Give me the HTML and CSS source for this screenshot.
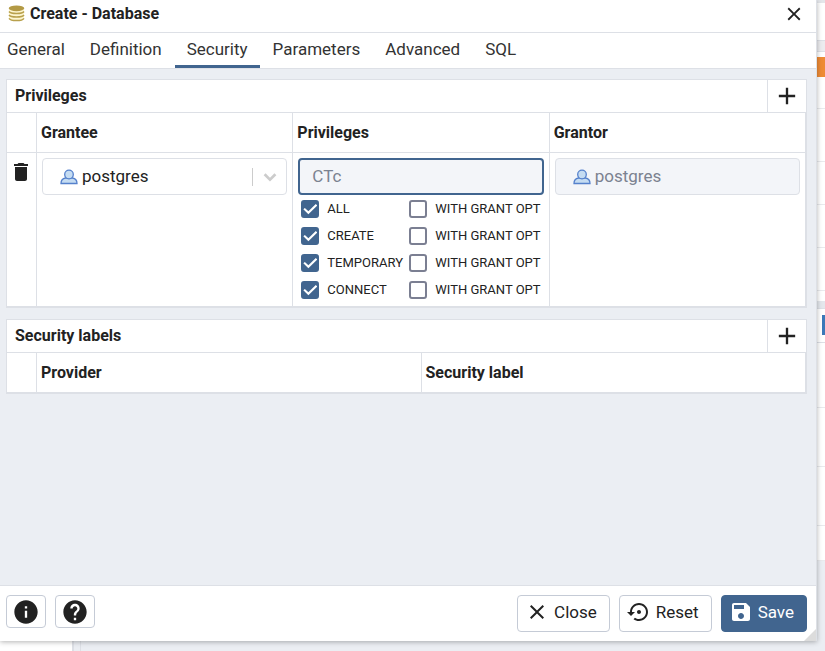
FILE: index.html
```html
<!DOCTYPE html>
<html lang="en">

<head>
  <meta charset="UTF-8">
  <meta name="viewport" content="width=device-width, initial-scale=1.0">
  <title>Create - Database</title>
  <link rel="stylesheet" href="styles.css">
</head>

<body>

  <div class="dialog" role="dialog" aria-labelledby="dialog-title">
    <header class="dialog-header">
      <svg class="icon-database" viewBox="0 0 17 17" aria-hidden="true">
        <path d="M1 3v10.500c0 1.500 3.500 2.500 7.500 2.500s7.500-1 7.500-2.500V3z" fill="#fdf6d0" />
        <path d="M1 6.500c1 1.500 4 2 7.500 2s6.500-.5 7.500-2M1 10c1 1.500 4 2 7.500 2s6.500-.5 7.500-2M1 13.300c1 1.700 4 2.200 7.500 2.200s6.500-.5 7.500-2.200" fill="none" stroke="#b8a04c" stroke-width="1.400" />
        <ellipse cx="8.500" cy="3.300" rx="7.800" ry="2.900" fill="#b39a45" />
      </svg>
      <h1 id="dialog-title">Create - Database</h1>
      <button class="btn-close" type="button" aria-label="Close dialog">
        <svg viewBox="0 0 24 24"><path d="M19 6.410 17.590 5 12 10.590 6.410 5 5 6.410 10.590 12 5 17.590 6.410 19 12 13.410 17.590 19 19 17.590 13.410 12z" /></svg>
      </button>
    </header>

    <nav class="tabs">
      <a href="#general">General</a>
      <a href="#definition">Definition</a>
      <a href="#security" class="active">Security</a>
      <a href="#parameters">Parameters</a>
      <a href="#advanced">Advanced</a>
      <a href="#sql">SQL</a>
    </nav>

    <main class="dialog-body">
      <section class="panel">
        <div class="panel-header">
          <h2>Privileges</h2>
          <button type="button" aria-label="Add privilege">
            <svg viewBox="0 0 24 24"><path d="M19 13h-6v6h-2v-6H5v-2h6V5h2v6h6z" /></svg>
          </button>
        </div>
        <table>
          <thead>
            <tr>
              <th class="col-action"></th>
              <th>Grantee</th>
              <th>Privileges</th>
              <th>Grantor</th>
            </tr>
          </thead>
          <tbody>
            <tr>
              <td class="col-action">
                <button class="btn-delete" type="button" aria-label="Delete row">
                  <svg viewBox="0 0 24 24"><path d="M6 19c0 1.100.9 2 2 2h8c1.100 0 2-.9 2-2V7H6zM19 4h-3.500l-1-1h-5l-1 1H5v2h14z" /></svg>
                </button>
              </td>
              <td>
                <div class="field">
                  <select aria-label="Grantee">
                    <option>postgres</option>
                  </select>
                  <svg class="icon-user" viewBox="0 0 18 16" aria-hidden="true">
                    <path d="M1 14.500c0-3 1.500-5 4.500-5.500h7c3 .5 4.500 2.500 4.500 5.500z" />
                    <circle cx="9" cy="5.500" r="4.300" />
                  </svg>
                  <span class="caret">
                    <svg viewBox="0 0 20 20"><path d="m4 7 6 6 6-6" /></svg>
                  </span>
                </div>
              </td>
              <td>
                <input class="privileges" type="text" value="CTc" aria-label="Privileges" readonly>
                <div class="options">
                  <label><input type="checkbox" checked>ALL</label>
                  <label><input type="checkbox">WITH GRANT OPT</label>
                  <label><input type="checkbox" checked>CREATE</label>
                  <label><input type="checkbox">WITH GRANT OPT</label>
                  <label><input type="checkbox" checked>TEMPORARY</label>
                  <label><input type="checkbox">WITH GRANT OPT</label>
                  <label><input type="checkbox" checked>CONNECT</label>
                  <label><input type="checkbox">WITH GRANT OPT</label>
                </div>
              </td>
              <td>
                <div class="field">
                  <select aria-label="Grantor" disabled>
                    <option>postgres</option>
                  </select>
                  <svg class="icon-user" viewBox="0 0 18 16" aria-hidden="true">
                    <path d="M1 14.500c0-3 1.500-5 4.500-5.500h7c3 .5 4.500 2.500 4.500 5.500z" />
                    <circle cx="9" cy="5.500" r="4.300" />
                  </svg>
                </div>
              </td>
            </tr>
          </tbody>
        </table>
      </section>

      <section class="panel">
        <div class="panel-header">
          <h2>Security labels</h2>
          <button type="button" aria-label="Add security label">
            <svg viewBox="0 0 24 24"><path d="M19 13h-6v6h-2v-6H5v-2h6V5h2v6h6z" /></svg>
          </button>
        </div>
        <table>
          <thead>
            <tr>
              <th class="col-action"></th>
              <th>Provider</th>
              <th>Security label</th>
            </tr>
          </thead>
        </table>
      </section>
    </main>

    <footer class="dialog-footer">
      <button class="btn btn-icon" type="button" aria-label="Info">
        <svg viewBox="0 0 24 24"><path d="M12 2C6.480 2 2 6.480 2 12s4.480 10 10 10 10-4.480 10-10S17.520 2 12 2m1 15h-2v-6h2zm0-8h-2V7h2z" /></svg>
      </button>
      <button class="btn btn-icon" type="button" aria-label="Help">
        <svg viewBox="0 0 24 24"><path d="M12 2C6.480 2 2 6.480 2 12s4.480 10 10 10 10-4.480 10-10S17.520 2 12 2m1 17h-2v-2h2zm2.070-7.750-.9.920C13.450 12.900 13 13.500 13 15h-2v-.5c0-1.100.450-2.100 1.170-2.830l1.240-1.260c.370-.360.590-.860.590-1.410 0-1.100-.9-2-2-2s-2 .9-2 2H8c0-2.210 1.790-4 4-4s4 1.790 4 4c0 .880-.360 1.680-.930 2.250" /></svg>
      </button>
      <div class="actions">
        <button class="btn" type="button">
          <svg viewBox="0 0 24 24"><path d="M19 6.410 17.590 5 12 10.590 6.410 5 5 6.410 10.590 12 5 17.590 6.410 19 12 13.410 17.590 19 19 17.590 13.410 12z" /></svg>
          Close
        </button>
        <button class="btn" type="button">
          <svg viewBox="0 0 24 24"><path d="M14 12c0-1.100-.9-2-2-2s-2 .9-2 2 .9 2 2 2 2-.9 2-2m-2-9c-4.970 0-9 4.030-9 9H0l4 4 4-4H5c0-3.870 3.130-7 7-7s7 3.130 7 7-3.130 7-7 7c-1.510 0-2.910-.490-4.060-1.300l-1.420 1.440C8.040 20.300 9.940 21 12 21c4.970 0 9-4.030 9-9s-4.030-9-9-9" /></svg>
          Reset
        </button>
        <button class="btn btn-primary" type="button">
          <svg viewBox="0 0 24 24"><path d="M17 3H5c-1.110 0-2 .9-2 2v14c0 1.100.890 2 2 2h14c1.100 0 2-.9 2-2V7zm-5 16c-1.660 0-3-1.340-3-3s1.340-3 3-3 3 1.340 3 3-1.340 3-3 3m3-10H5V5h10z" /></svg>
          Save
        </button>
      </div>
      <span class="resize-handle"></span>
    </footer>
  </div>

  <!-- dashboard visible past the dialog edge -->
  <div class="dashboard">
    <div class="toolbar"></div>
    <div class="divider"></div>
    <div class="notice"></div>
    <div class="line"></div>
    <div class="line"></div>
    <div class="line"></div>
    <div class="line"></div>
    <div class="splitter"></div>
    <div class="subtabs"></div>
    <div class="line tall"></div>
    <div class="line tall"></div>
    <div class="line tall"></div>
    <div class="end"></div>
  </div>
  <div class="status"></div>

</body>

</html>
```
FILE: styles.css
```css
* {
  box-sizing: border-box;
}

body {
  margin: 0;
  min-height: 100vh;
  display: grid;
  grid-template-columns: 1fr 8px;
  grid-template-rows: 1fr 10px;
  background: #ebeef3;
  color: #222;
  font-family: Roboto, "Liberation Sans", sans-serif;
  font-size: 16px;
  line-height: 20px;
}

h1,
h2 {
  margin: 0;
  font-size: 16px;
  font-weight: 700;
}

button,
input,
select {
  font: inherit;
  color: inherit;
}

button {
  border: 0;
  padding: 0;
  background: none;
  cursor: pointer;
}

button svg {
  display: block;
  width: 24px;
  height: 24px;
  flex: none;
  fill: currentColor;
}

/* Dialog */
.dialog {
  display: flex;
  flex-direction: column;
  z-index: 1;
  background: #fff;
  border-right: 1px solid #dde0e6;
  box-shadow: 0 1px 5px rgba(0, 0, 0, 0.3);
}

.dialog-header {
  display: flex;
  align-items: center;
  gap: 5px;
  height: 33px;
  padding: 0 11px 5px 8px;
  border-bottom: 1px solid #dde0e6;
}

.icon-database {
  width: 17px;
  height: 17px;
}

.btn-close {
  margin-left: auto;
}

.btn-close svg {
  width: 22px;
  height: 22px;
}

/* Tabs */
.tabs {
  display: flex;
  gap: 1px;
  height: 36px;
  border-bottom: 1px solid #dde0e6;
}

.tabs a {
  padding: 6px 12px 0;
  border-bottom: 3px solid transparent;
  color: #333;
  font-size: 17px;
  text-decoration: none;
}

.tabs a:first-child {
  padding-left: 7px;
}

.tabs a.active {
  border-color: #41658f;
}

/* Panels */
.dialog-body {
  flex: 1;
  display: flex;
  flex-direction: column;
  gap: 11px;
  padding: 10px 9px 10px 6px;
  background: #ebeef3;
}

.panel {
  border: 1px solid #dde0e6;
  border-bottom-width: 2px;
  background: #fff;
}

.panel-header {
  display: flex;
  height: 33px;
  border-bottom: 1px solid #dde0e6;
}

.panel-header h2 {
  flex: 1;
  padding: 6px 8px;
}

.panel-header button {
  display: flex;
  align-items: center;
  justify-content: center;
  width: 39px;
  border-left: 1px solid #dde0e6;
}

.panel-header svg {
  width: 28px;
  height: 28px;
}

table {
  width: 100%;
  table-layout: fixed;
  border-collapse: separate;
  border-spacing: 0;
}

th,
td {
  padding: 5px;
  border-right: 1px solid #dde0e6;
  text-align: left;
  vertical-align: top;
}

th {
  height: 39px;
  padding: 5px 4px;
  font-weight: 700;
  vertical-align: middle;
}

td {
  border-top: 1px solid #dde0e6;
}

.col-action {
  width: 30px;
  padding-left: 2px;
}

.btn-delete {
  margin-top: 2px;
}

/* Fields */
.field {
  display: grid;
  align-items: center;
}

.field > * {
  grid-area: 1 / 1;
}

.field select,
.privileges {
  display: block;
  width: 100%;
  height: 37px;
  margin: 0;
  border: 1px solid #dde0e6;
  border-radius: 4px;
  background: #fff;
  font-size: 17px;
  appearance: none;
}

.field select {
  padding: 0 40px 2px 39px;
}

.field select:disabled {
  background: #f3f5f9;
  color: #7b8290;
  opacity: 1;
}

.privileges {
  padding: 0 12px 2px;
  border: 2px solid #41658f;
  background: #f3f5f9;
  color: #7b8290;
  outline: none;
}

.icon-user {
  width: 18px;
  height: 16px;
  margin-left: 18px;
  fill: #c5dcf2;
  stroke: #5581cc;
  stroke-width: 1.3;
  pointer-events: none;
}

.caret {
  justify-self: end;
  padding: 0 7px;
  border-left: 1px solid #ccc;
  pointer-events: none;
}

.caret svg {
  display: block;
  width: 20px;
  height: 18px;
  fill: none;
  stroke: #ccc;
  stroke-width: 3;
}

.options {
  display: grid;
  grid-template-columns: 108px 1fr;
  row-gap: 9px;
  padding: 5px 0 2px 3px;
}

.options label {
  display: flex;
  align-items: center;
  gap: 8px;
  height: 18px;
  font-size: 13px;
  white-space: nowrap;
}

.options input {
  flex: none;
  width: 18px;
  height: 18px;
  margin: 0;
  border: 2px solid #7b7f92;
  border-radius: 3px;
  background: #fff;
  appearance: none;
}

.options input:checked {
  border-color: #41658f;
  background: #41658f;
}

.options input:checked::before {
  content: "";
  display: block;
  height: 14px;
  background: #fff;
  clip-path: polygon(0 52%, 11% 42%, 36% 66%, 89% 14%, 100% 25%, 36% 88%);
}

/* Footer */
.dialog-footer {
  position: relative;
  display: flex;
  align-items: flex-start;
  gap: 9px;
  padding: 9px 9px 9px 6px;
  border-top: 1px solid #dde0e6;
}

.actions {
  display: flex;
  gap: 9px;
  margin-left: auto;
}

.btn {
  display: flex;
  align-items: center;
  gap: 5px;
  height: 37px;
  padding: 0 12px 4px 7px;
  border: 1px solid #c5cbd6;
  border-radius: 4px;
  background: #fff;
  font-size: 17px;
}

.btn-icon {
  justify-content: center;
  width: 40px;
  height: 33px;
  padding: 0;
}

.btn-icon svg {
  width: 28px;
  height: 28px;
}

.btn-primary {
  border-color: #41658f;
  background: #41658f;
  color: #fff;
}

.resize-handle {
  position: absolute;
  right: 0;
  bottom: 0;
  border: 6px solid;
  border-color: transparent #dcdcdc #dcdcdc transparent;
}

/* Dashboard */
.dashboard {
  grid-row: 1 / 3;
  grid-column: 2;
}

.dashboard div {
  border-bottom: 1px solid #e9eaed;
  background: #fff;
}

.dashboard .toolbar {
  height: 41px;
  border-top: 3px solid #e4e6ea;
  border-bottom-color: #dde0e6;
}

.dashboard .divider {
  height: 11px;
  border-bottom-color: #dde0e6;
  background: #ececef;
}

.dashboard .notice {
  height: 57px;
  padding-top: 5px;
}

.dashboard .notice::before {
  content: "";
  display: block;
  height: 20px;
  background: #ee8b35;
}

.dashboard .line {
  height: 43px;
}

.dashboard .notice + .line {
  height: 53px;
}

.dashboard .splitter {
  height: 18px;
  border-top: 10px solid #fff;
  border-bottom-color: #dde0e6;
  background: #e4e7ec;
}

.dashboard .subtabs {
  height: 34px;
  padding: 6px 0 0 5px;
  border-bottom-color: #dde0e6;
}

.dashboard .subtabs::before {
  content: "";
  display: block;
  height: 20px;
  background: #3b78b8;
}

.dashboard .line.tall {
  height: 59px;
}

.dashboard .subtabs + .line.tall {
  height: 65px;
}

.dashboard .end {
  height: 35px;
}

.status {
  grid-row: 2;
  grid-column: 1;
  width: 81px;
  border-right: 1px solid #dde0e6;
  background: linear-gradient(90deg, #fff 72px, #dde0e6 72px, #dde0e6 74px, #ebeef3 74px);
}
```
